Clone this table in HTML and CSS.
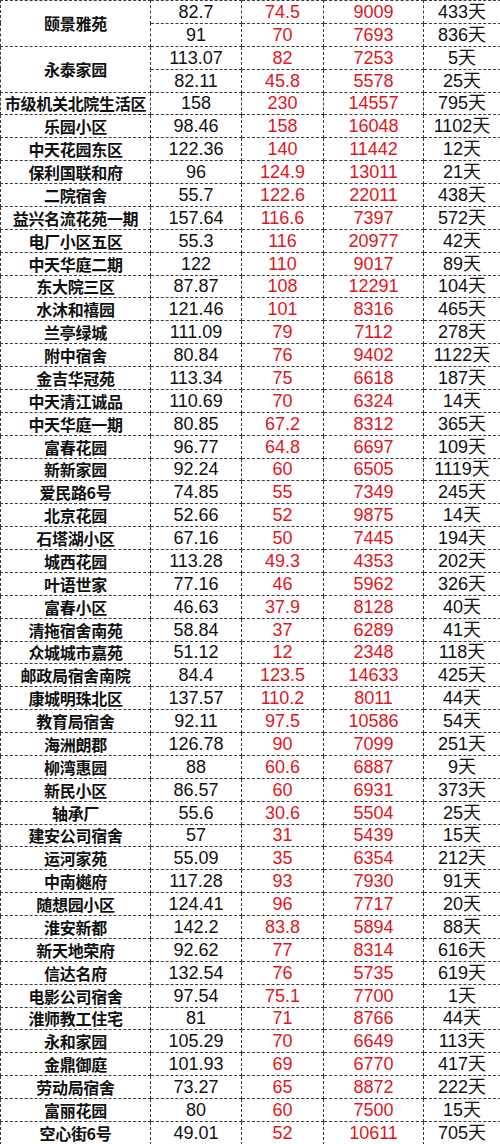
FILE: index.html
```html
<!DOCTYPE html>
<html lang="zh-CN">
<head>
<meta charset="utf-8">
<title>小区数据</title>
<link rel="stylesheet" href="styles.css">
</head>
<body>
<table class="sheet">
<colgroup>
<col class="c-name"><col class="c-area"><col class="c-total"><col class="c-unit"><col class="c-days">
</colgroup>
<tbody>
<tr><td class="name" rowspan="2">颐景雅苑</td><td class="num">82.7</td><td class="num red">74.5</td><td class="num red">9009</td><td class="num days">433天</td></tr>
<tr><td class="num">91</td><td class="num red">70</td><td class="num red">7693</td><td class="num days">836天</td></tr>
<tr><td class="name" rowspan="2">永泰家园</td><td class="num">113.07</td><td class="num red">82</td><td class="num red">7253</td><td class="num days">5天</td></tr>
<tr><td class="num">82.11</td><td class="num red">45.8</td><td class="num red">5578</td><td class="num days">25天</td></tr>
<tr><td class="name">市级机关北院生活区</td><td class="num">158</td><td class="num red">230</td><td class="num red">14557</td><td class="num days">795天</td></tr>
<tr><td class="name">乐园小区</td><td class="num">98.46</td><td class="num red">158</td><td class="num red">16048</td><td class="num days">1102天</td></tr>
<tr><td class="name">中天花园东区</td><td class="num">122.36</td><td class="num red">140</td><td class="num red">11442</td><td class="num days">12天</td></tr>
<tr><td class="name">保利国联和府</td><td class="num">96</td><td class="num red">124.9</td><td class="num red">13011</td><td class="num days">21天</td></tr>
<tr><td class="name">二院宿舍</td><td class="num">55.7</td><td class="num red">122.6</td><td class="num red">22011</td><td class="num days">438天</td></tr>
<tr><td class="name">益兴名流花苑一期</td><td class="num">157.64</td><td class="num red">116.6</td><td class="num red">7397</td><td class="num days">572天</td></tr>
<tr><td class="name">电厂小区五区</td><td class="num">55.3</td><td class="num red">116</td><td class="num red">20977</td><td class="num days">42天</td></tr>
<tr><td class="name">中天华庭二期</td><td class="num">122</td><td class="num red">110</td><td class="num red">9017</td><td class="num days">89天</td></tr>
<tr><td class="name">东大院三区</td><td class="num">87.87</td><td class="num red">108</td><td class="num red">12291</td><td class="num days">104天</td></tr>
<tr><td class="name">水沐和禧园</td><td class="num">121.46</td><td class="num red">101</td><td class="num red">8316</td><td class="num days">465天</td></tr>
<tr><td class="name">兰亭绿城</td><td class="num">111.09</td><td class="num red">79</td><td class="num red">7112</td><td class="num days">278天</td></tr>
<tr><td class="name">附中宿舍</td><td class="num">80.84</td><td class="num red">76</td><td class="num red">9402</td><td class="num days">1122天</td></tr>
<tr><td class="name">金吉华冠苑</td><td class="num">113.34</td><td class="num red">75</td><td class="num red">6618</td><td class="num days">187天</td></tr>
<tr><td class="name">中天清江诚品</td><td class="num">110.69</td><td class="num red">70</td><td class="num red">6324</td><td class="num days">14天</td></tr>
<tr><td class="name">中天华庭一期</td><td class="num">80.85</td><td class="num red">67.2</td><td class="num red">8312</td><td class="num days">365天</td></tr>
<tr><td class="name">富春花园</td><td class="num">96.77</td><td class="num red">64.8</td><td class="num red">6697</td><td class="num days">109天</td></tr>
<tr><td class="name">新新家园</td><td class="num">92.24</td><td class="num red">60</td><td class="num red">6505</td><td class="num days">1119天</td></tr>
<tr><td class="name">爱民路6号</td><td class="num">74.85</td><td class="num red">55</td><td class="num red">7349</td><td class="num days">245天</td></tr>
<tr><td class="name">北京花园</td><td class="num">52.66</td><td class="num red">52</td><td class="num red">9875</td><td class="num days">14天</td></tr>
<tr><td class="name">石塔湖小区</td><td class="num">67.16</td><td class="num red">50</td><td class="num red">7445</td><td class="num days">194天</td></tr>
<tr><td class="name">城西花园</td><td class="num">113.28</td><td class="num red">49.3</td><td class="num red">4353</td><td class="num days">202天</td></tr>
<tr><td class="name">叶语世家</td><td class="num">77.16</td><td class="num red">46</td><td class="num red">5962</td><td class="num days">326天</td></tr>
<tr><td class="name">富春小区</td><td class="num">46.63</td><td class="num red">37.9</td><td class="num red">8128</td><td class="num days">40天</td></tr>
<tr><td class="name">清拖宿舍南苑</td><td class="num">58.84</td><td class="num red">37</td><td class="num red">6289</td><td class="num days">41天</td></tr>
<tr><td class="name">众城城市嘉苑</td><td class="num">51.12</td><td class="num red">12</td><td class="num red">2348</td><td class="num days">118天</td></tr>
<tr><td class="name">邮政局宿舍南院</td><td class="num">84.4</td><td class="num red">123.5</td><td class="num red">14633</td><td class="num days">425天</td></tr>
<tr><td class="name">康城明珠北区</td><td class="num">137.57</td><td class="num red">110.2</td><td class="num red">8011</td><td class="num days">44天</td></tr>
<tr><td class="name">教育局宿舍</td><td class="num">92.11</td><td class="num red">97.5</td><td class="num red">10586</td><td class="num days">54天</td></tr>
<tr><td class="name">海洲朗郡</td><td class="num">126.78</td><td class="num red">90</td><td class="num red">7099</td><td class="num days">251天</td></tr>
<tr><td class="name">柳湾惠园</td><td class="num">88</td><td class="num red">60.6</td><td class="num red">6887</td><td class="num days">9天</td></tr>
<tr><td class="name">新民小区</td><td class="num">86.57</td><td class="num red">60</td><td class="num red">6931</td><td class="num days">373天</td></tr>
<tr><td class="name">轴承厂</td><td class="num">55.6</td><td class="num red">30.6</td><td class="num red">5504</td><td class="num days">25天</td></tr>
<tr><td class="name">建安公司宿舍</td><td class="num">57</td><td class="num red">31</td><td class="num red">5439</td><td class="num days">15天</td></tr>
<tr><td class="name">运河家苑</td><td class="num">55.09</td><td class="num red">35</td><td class="num red">6354</td><td class="num days">212天</td></tr>
<tr><td class="name">中南樾府</td><td class="num">117.28</td><td class="num red">93</td><td class="num red">7930</td><td class="num days">91天</td></tr>
<tr><td class="name">随想园小区</td><td class="num">124.41</td><td class="num red">96</td><td class="num red">7717</td><td class="num days">20天</td></tr>
<tr><td class="name">淮安新都</td><td class="num">142.2</td><td class="num red">83.8</td><td class="num red">5894</td><td class="num days">88天</td></tr>
<tr><td class="name">新天地荣府</td><td class="num">92.62</td><td class="num red">77</td><td class="num red">8314</td><td class="num days">616天</td></tr>
<tr><td class="name">信达名府</td><td class="num">132.54</td><td class="num red">76</td><td class="num red">5735</td><td class="num days">619天</td></tr>
<tr><td class="name">电影公司宿舍</td><td class="num">97.54</td><td class="num red">75.1</td><td class="num red">7700</td><td class="num days">1天</td></tr>
<tr><td class="name">淮师教工住宅</td><td class="num">81</td><td class="num red">71</td><td class="num red">8766</td><td class="num days">44天</td></tr>
<tr><td class="name">永和家园</td><td class="num">105.29</td><td class="num red">70</td><td class="num red">6649</td><td class="num days">113天</td></tr>
<tr><td class="name">金鼎御庭</td><td class="num">101.93</td><td class="num red">69</td><td class="num red">6770</td><td class="num days">417天</td></tr>
<tr><td class="name">劳动局宿舍</td><td class="num">73.27</td><td class="num red">65</td><td class="num red">8872</td><td class="num days">222天</td></tr>
<tr><td class="name">富丽花园</td><td class="num">80</td><td class="num red">60</td><td class="num red">7500</td><td class="num days">15天</td></tr>
<tr><td class="name">空心街6号</td><td class="num">49.01</td><td class="num red">52</td><td class="num red">10611</td><td class="num days">705天</td></tr>
</tbody>
</table>
</body>
</html>
```

FILE: styles.css
```css
html, body {
  margin: 0;
  padding: 0;
  background: #fff;
}

.sheet {
  width: 500px;
  height: 1144px;
  table-layout: fixed;
  border-collapse: collapse;
  font-family: "Liberation Sans", Arial, "Noto Sans CJK SC", sans-serif;
  color: #111;
}

.c-name { width: 150px; }
.c-area { width: 91px; }
.c-total { width: 82px; }
.c-unit { width: 100px; }
.c-days { width: 77px; }

.sheet tr {
  height: 22.88px;
}

.sheet td {
  border: 1px dashed #3a3a3a;
  padding: 0;
  text-align: center;
  vertical-align: middle;
  white-space: nowrap;
  overflow: hidden;
  line-height: 20px;
}

.name {
  font-family: "Noto Sans CJK SC", sans-serif;
  font-size: 16px;
  font-weight: 700;
  letter-spacing: -0.3px;
}

.num {
  font-size: 18px;
}

.red {
  color: #e0161d;
}

.days {
  font-family: "Liberation Sans", "Noto Sans CJK SC", sans-serif;
}
```
